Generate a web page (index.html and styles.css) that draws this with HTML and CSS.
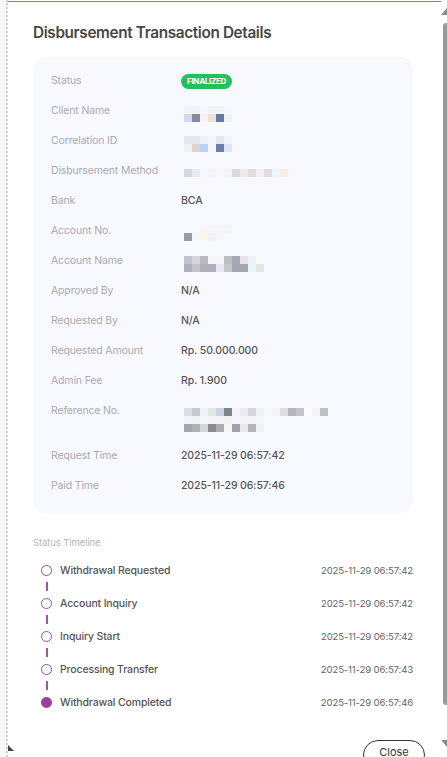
FILE: index.html
```html
<!DOCTYPE html>
<html>
<head>
<meta charset="utf-8">
<link rel="stylesheet" href="styles.css">
</head>
<body>
<div class="frame">
  <div class="edge"></div>
  <div class="main">
    <h1 class="title">Disbursement Transaction Details</h1>
    <div class="card">
      <div class="row"><div class="label">Status</div><div class="value"><span class="badge">FINALIZED</span></div></div>
      <div class="row"><div class="label">Client Name</div><div class="value">
        <div class="mosaic m2">
          <div class="mrow"><span style="background:#f3f4f8"></span><span style="background:#f1f2f6"></span><span style="background:#f6f7fa"></span><span style="background:#f3f3f6"></span><span style="background:#f2f3f7"></span><span style="background:#f6f7fa"></span></div>
          <div class="mrow"><span style="background:#d3dbe8"></span><span style="background:#868a9c"></span><span style="background:#f4f4f2"></span><span style="background:#ebe2d2"></span><span style="background:#6677a8"></span><span style="background:#eef1f8"></span></div>
        </div></div></div>
      <div class="row"><div class="label">Correlation ID</div><div class="value">
        <div class="mosaic m2">
          <div class="mrow"><span style="background:#e7e8ee"></span><span style="background:#e7e8ee"></span><span style="background:#f0f1f5"></span><span style="background:#f5f6fa"></span><span style="background:#e6e7ec"></span><span style="background:#f4f5f8"></span></div>
          <div class="mrow"><span style="background:#f0f1f4"></span><span style="background:#e0d4cc"></span><span style="background:#b5d3f2"></span><span style="background:#f6f7fa"></span><span style="background:#6e7fa8"></span><span style="background:#dbe7f5"></span></div>
        </div></div></div>
      <div class="row"><div class="label">Disbursement Method</div><div class="value">
        <div class="mosaic m1">
          <div class="mrow"><span style="background:#d6d6dd"></span><span style="background:#e3ebf4"></span><span style="background:#f8f8fa"></span><span style="background:#f3f3f6"></span><span style="background:#f8f8fa"></span><span style="background:#f3f3f6"></span><span style="background:#dadadd"></span><span style="background:#ececef"></span><span style="background:#e6dadb"></span><span style="background:#eef2f8"></span><span style="background:#e5dbde"></span><span style="background:#eef4fa"></span><span style="background:#f6f0e2"></span><span style="background:#f8f8fa"></span></div>
        </div></div></div>
      <div class="row"><div class="label">Bank</div><div class="value">BCA</div></div>
      <div class="row"><div class="label">Account No.</div><div class="value">
        <div class="mosaic m2b">
          <div class="mrow"><span style="background:#f8f9fd"></span><span style="background:#f8f9fd"></span><span style="background:#fbf3f6"></span><span style="background:#f4f4f9"></span><span style="background:#f5f5f9"></span><span style="background:#f3f3f7"></span></div>
          <div class="mrow"><span style="background:#9b9ba0"></span><span style="background:#f6f7fb"></span><span style="background:#fcf7ec"></span><span style="background:#eff3f9"></span><span style="background:#f6f7fb"></span><span style="background:#f9f9fb"></span></div>
        </div></div></div>
      <div class="row"><div class="label">Account Name</div><div class="value">
        <div class="mosaic m2">
          <div class="mrow"><span style="background:#c3c3cb"></span><span style="background:#d5d5db"></span><span style="background:#b9b8c3"></span><span style="background:#f5f5fa"></span><span style="background:#f6f6f9"></span><span style="background:#bcbcc3"></span><span style="background:#a9a9b3"></span><span style="background:#e9e2ec"></span><span style="background:#f1f1f4"></span><span style="background:#f9f9fb"></span></div>
          <div class="mrow"><span style="background:#afafb8"></span><span style="background:#c1c4cb"></span><span style="background:#b0b0bd"></span><span style="background:#b0b0bd"></span><span style="background:#e8e8f2"></span><span style="background:#c8c8cc"></span><span style="background:#a6a6ae"></span><span style="background:#a6a6ae"></span><span style="background:#eaf4fb"></span><span style="background:#e4e6e2"></span></div>
        </div></div></div>
      <div class="row"><div class="label">Approved By</div><div class="value">N/A</div></div>
      <div class="row"><div class="label">Requested By</div><div class="value">N/A</div></div>
      <div class="row"><div class="label">Requested Amount</div><div class="value">Rp. 50.000.000</div></div>
      <div class="row"><div class="label">Admin Fee</div><div class="value">Rp. 1.900</div></div>
      <div class="row"><div class="label">Reference No.</div><div class="value">
        <div class="mosaic m3">
          <div class="mrow"><span style="background:#dcdde2"></span><span style="background:#c7cbd0"></span><span style="background:#eff3f6"></span><span style="background:#dfe8e3"></span><span style="background:#cdd3de"></span><span style="background:#7b858b"></span><span style="background:#f4f5f8"></span><span style="background:#ebebef"></span><span style="background:#d7d6de"></span><span style="background:#eff0f4"></span><span style="background:#f8f8fb"></span><span style="background:#f5f5f8"></span><span style="background:#e0dbe1"></span><span style="background:#b3b7bb"></span><span style="background:#c4c4c8"></span><span style="background:#fbfbfc"></span><span style="background:#f5f5f8"></span><span style="background:#bfbfbf"></span></div>
          <div class="mrow"><span style="background:#f3f4f8"></span><span style="background:#f1f2f6"></span><span style="background:#f5f7f9"></span><span style="background:#f2f4f6"></span><span style="background:#f4f5f8"></span><span style="background:#f1f3f5"></span><span style="background:#f6f7fa"></span><span style="background:#f4f5f8"></span><span style="background:#f5f5f8"></span><span style="background:#f7f7fa"></span></div>
          <div class="mrow"><span style="background:#a4a4a9"></span><span style="background:#b0b0b5"></span><span style="background:#d4d8dc"></span><span style="background:#8b8b93"></span><span style="background:#acacb1"></span><span style="background:#fcf5f5"></span><span style="background:#a0a0a8"></span><span style="background:#e9e9e9"></span><span style="background:#b4b4b8"></span><span style="background:#f1f1f4"></span></div>
        </div></div></div>
      <div class="row"><div class="label">Request Time</div><div class="value">2025-11-29 06:57:42</div></div>
      <div class="row"><div class="label">Paid Time</div><div class="value">2025-11-29 06:57:46</div></div>
    </div>

    <div class="tl-title">Status Timeline</div>
    <div class="timeline">
      <div class="tl-item"><span class="dot"></span><span class="tl-name">Withdrawal Requested</span><span class="tl-time">2025-11-29 06:57:42</span></div>
      <div class="tl-link"><span></span></div>
      <div class="tl-item"><span class="dot"></span><span class="tl-name">Account Inquiry</span><span class="tl-time">2025-11-29 06:57:42</span></div>
      <div class="tl-link"><span></span></div>
      <div class="tl-item"><span class="dot"></span><span class="tl-name">Inquiry Start</span><span class="tl-time">2025-11-29 06:57:42</span></div>
      <div class="tl-link"><span></span></div>
      <div class="tl-item"><span class="dot"></span><span class="tl-name">Processing Transfer</span><span class="tl-time">2025-11-29 06:57:43</span></div>
      <div class="tl-link"><span></span></div>
      <div class="tl-item"><span class="dot filled"></span><span class="tl-name">Withdrawal Completed</span><span class="tl-time">2025-11-29 06:57:46</span></div>
    </div>

    <div class="footer"><button class="close">Close</button></div>
    <svg class="resize" width="6" height="6" viewBox="0 0 6 6"><polygon points="0,0 0,6 6,6" fill="#444"/></svg>
  </div>
  <div class="scroll">
    <svg class="arrow up" width="6" height="7" viewBox="0 0 6 7"><polygon points="6,0 6,7 0,7" fill="#8a8a8a"/></svg>
    <div class="thumb"></div>
    <svg class="arrow down" width="6" height="7" viewBox="0 0 6 7"><polygon points="0,0 6,0 6,7" fill="#8a8a8a"/></svg>
  </div>
</div>
</body>
</html>
```

FILE: styles.css
```css
* { box-sizing: border-box; }
html, body { margin: 0; padding: 0; background: #fff; }
body { font-family: Inter, "Open Sans", sans-serif; color: #555; }

.frame {
  display: flex;
  width: 447px;
  height: 757px;
  overflow: hidden;
}
.edge {
  width: 8px;
  flex: none;
  background: #f7f7f7;
  border-right: 2px dotted #d0d0d0;
}
.main {
  position: relative;
  flex: 1;
  min-width: 0;
  margin-top: 1px;
  border-top: 1.5px solid #9e73a9;
  padding: 21px 28px 0 25px;
  display: flex;
  flex-direction: column;
}
.title {
  margin: 0 0 14px;
  font-size: 15.3px;
  line-height: 20px;
  font-weight: 600;
  color: #474747;
  letter-spacing: -0.35px;
}
.card {
  background: #f8f9fe;
  border-radius: 12px;
  padding: 16px 18px 19px;
  display: flex;
  flex-direction: column;
  gap: 14px;
}
.row {
  display: flex;
  font-size: 10.5px;
  line-height: 16px;
}
.label {
  width: 130px;
  flex: none;
  color: #a9aab2;
  letter-spacing: -0.15px;
}
.value {
  color: #555;
  font-weight: 500;
  letter-spacing: -0.1px;
}
.badge {
  display: inline-block;
  background: #27bf5e;
  color: #fff;
  font-size: 8px;
  font-weight: 700;
  line-height: 15px;
  height: 15px;
  padding: 0 6px;
  border-radius: 8px;
  letter-spacing: -0.3px;
  vertical-align: top;
  margin-top: 1px;
}
.mosaic { display: flex; flex-direction: column; margin-left: 3px; }
.mrow { display: flex; height: 8px; }
.mrow span { width: 8px; height: 8px; flex: none; }
.m2 { margin-top: 3px; margin-bottom: -3px; }
.m2b { margin-top: 2px; margin-bottom: -2px; }
.m1 { margin-top: 6px; }
.m3 { margin-top: 5px; margin-bottom: 2px; }

.tl-title {
  margin-top: 23px;
  font-size: 9.5px;
  line-height: 14px;
  color: #b4b5bb;
  letter-spacing: -0.1px;
}
.timeline {
  margin-top: 12px;
  display: flex;
  flex-direction: column;
}
.tl-item {
  display: flex;
  align-items: center;
  height: 16px;
  padding-left: 8px;
}
.dot {
  width: 11px;
  height: 11px;
  border: 1.5px solid #9b4f9f;
  border-radius: 50%;
  flex: none;
  margin-right: 8px;
}
.dot.filled { background: #9b3e9c; border-color: #9b3e9c; }
.tl-name {
  flex: 1;
  font-size: 10.5px;
  color: #555;
  font-weight: 500;
  letter-spacing: -0.15px;
}
.tl-time {
  font-size: 9.6px;
  color: #666;
  letter-spacing: -0.15px;
}
.tl-link {
  height: 17px;
  padding-left: 12.5px;
  display: flex;
  align-items: center;
}
.tl-link span {
  width: 2px;
  height: 9px;
  background: #a256a6;
}
.footer {
  display: flex;
  justify-content: flex-end;
  margin-top: 30px;
  margin-right: -12px;
}
.close {
  font-family: Inter, sans-serif;
  font-size: 11px;
  color: #333;
  background: #fff;
  border: 1px solid #333;
  border-radius: 16px;
  width: 62px;
  height: 30px;
  padding: 0 0 6px;
}
.resize {
  position: absolute;
  left: 0;
  bottom: 6px;
}
.scroll {
  width: 6px;
  flex: none;
  display: flex;
  flex-direction: column;
  align-items: flex-end;
  padding-top: 8px;
}
.arrow { display: block; flex: none; }
.thumb {
  width: 4px;
  height: 682px;
  margin-top: 8px;
  background: #9a9a9a;
  border-radius: 3px 0 0 3px;
}
.down { margin-top: 35px; }
```
